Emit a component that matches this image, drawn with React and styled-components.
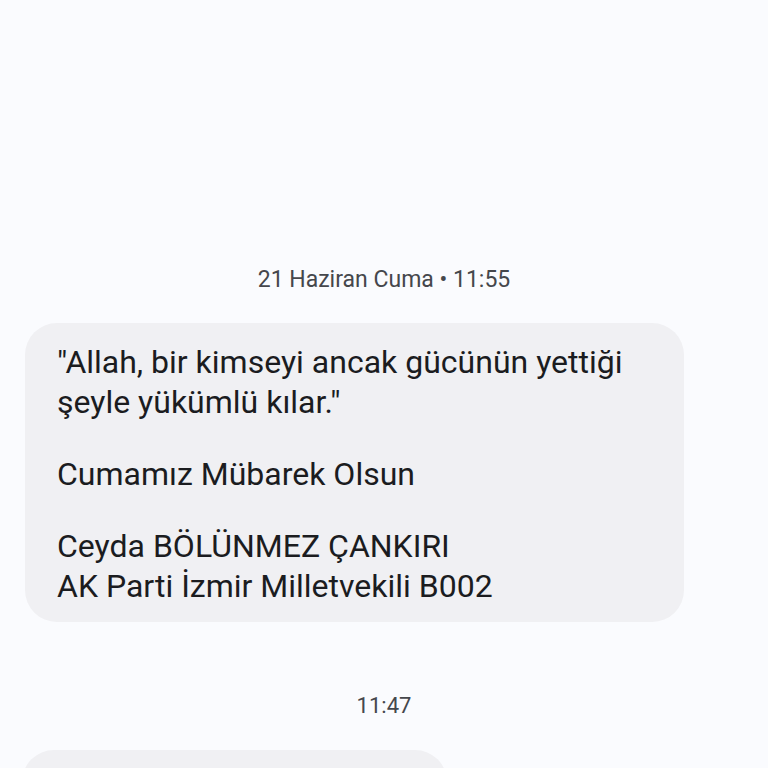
import styled, { createGlobalStyle } from "styled-components";

const GlobalStyle = createGlobalStyle`
  html, body {
    margin: 0;
    padding: 0;
    background: #fafbfe;
    font-family: Roboto, "Noto Sans", sans-serif;
  }
`;

const Thread = styled.main`
  display: flex;
  flex-direction: column;
  width: 768px;
  height: 768px;
  overflow: hidden;
  padding-top: 268px;
  box-sizing: border-box;
`;

const Stamp = styled.div`
  text-align: center;
  font-size: ${(p) => p.$size}px;
  line-height: 24px;
  color: #45474c;
  margin-bottom: ${(p) => p.$after}px;
`;

const Bubble = styled.div`
  align-self: flex-start;
  box-sizing: border-box;
  width: ${(p) => p.$width}px;
  min-height: ${(p) => p.$minHeight || 0}px;
  margin-left: ${(p) => p.$left}px;
  margin-bottom: ${(p) => p.$after || 0}px;
  padding: 19px 32px 16px;
  background: #f0f0f3;
  border-radius: 32px;
  color: #1b1c1f;
  font-size: 32px;
  line-height: 40px;
  flex-shrink: 0;
`;

const Para = styled.p`
  margin: 0;
  white-space: nowrap;
  & + & {
    margin-top: 32px;
  }
`;

export default function App() {
  return (
    <>
      <GlobalStyle />
      <Thread>
        <Stamp $size={23} $after={31}>21 Haziran Cuma • 11:55</Stamp>
        <Bubble $width={659} $left={25} $after={72}>
          <Para>
            "Allah, bir kimseyi ancak gücünün yettiği
            <br />
            şeyle yükümlü kılar."
          </Para>
          <Para>Cumamız Mübarek Olsun</Para>
          <Para>
            Ceyda BÖLÜNMEZ ÇANKIRI
            <br />
            AK Parti İzmir Milletvekili B002
          </Para>
        </Bubble>
        <Stamp $size={22} $after={32}>11:47</Stamp>
        <Bubble $width={425} $left={22} $minHeight={120} />
      </Thread>
    </>
  );
}
